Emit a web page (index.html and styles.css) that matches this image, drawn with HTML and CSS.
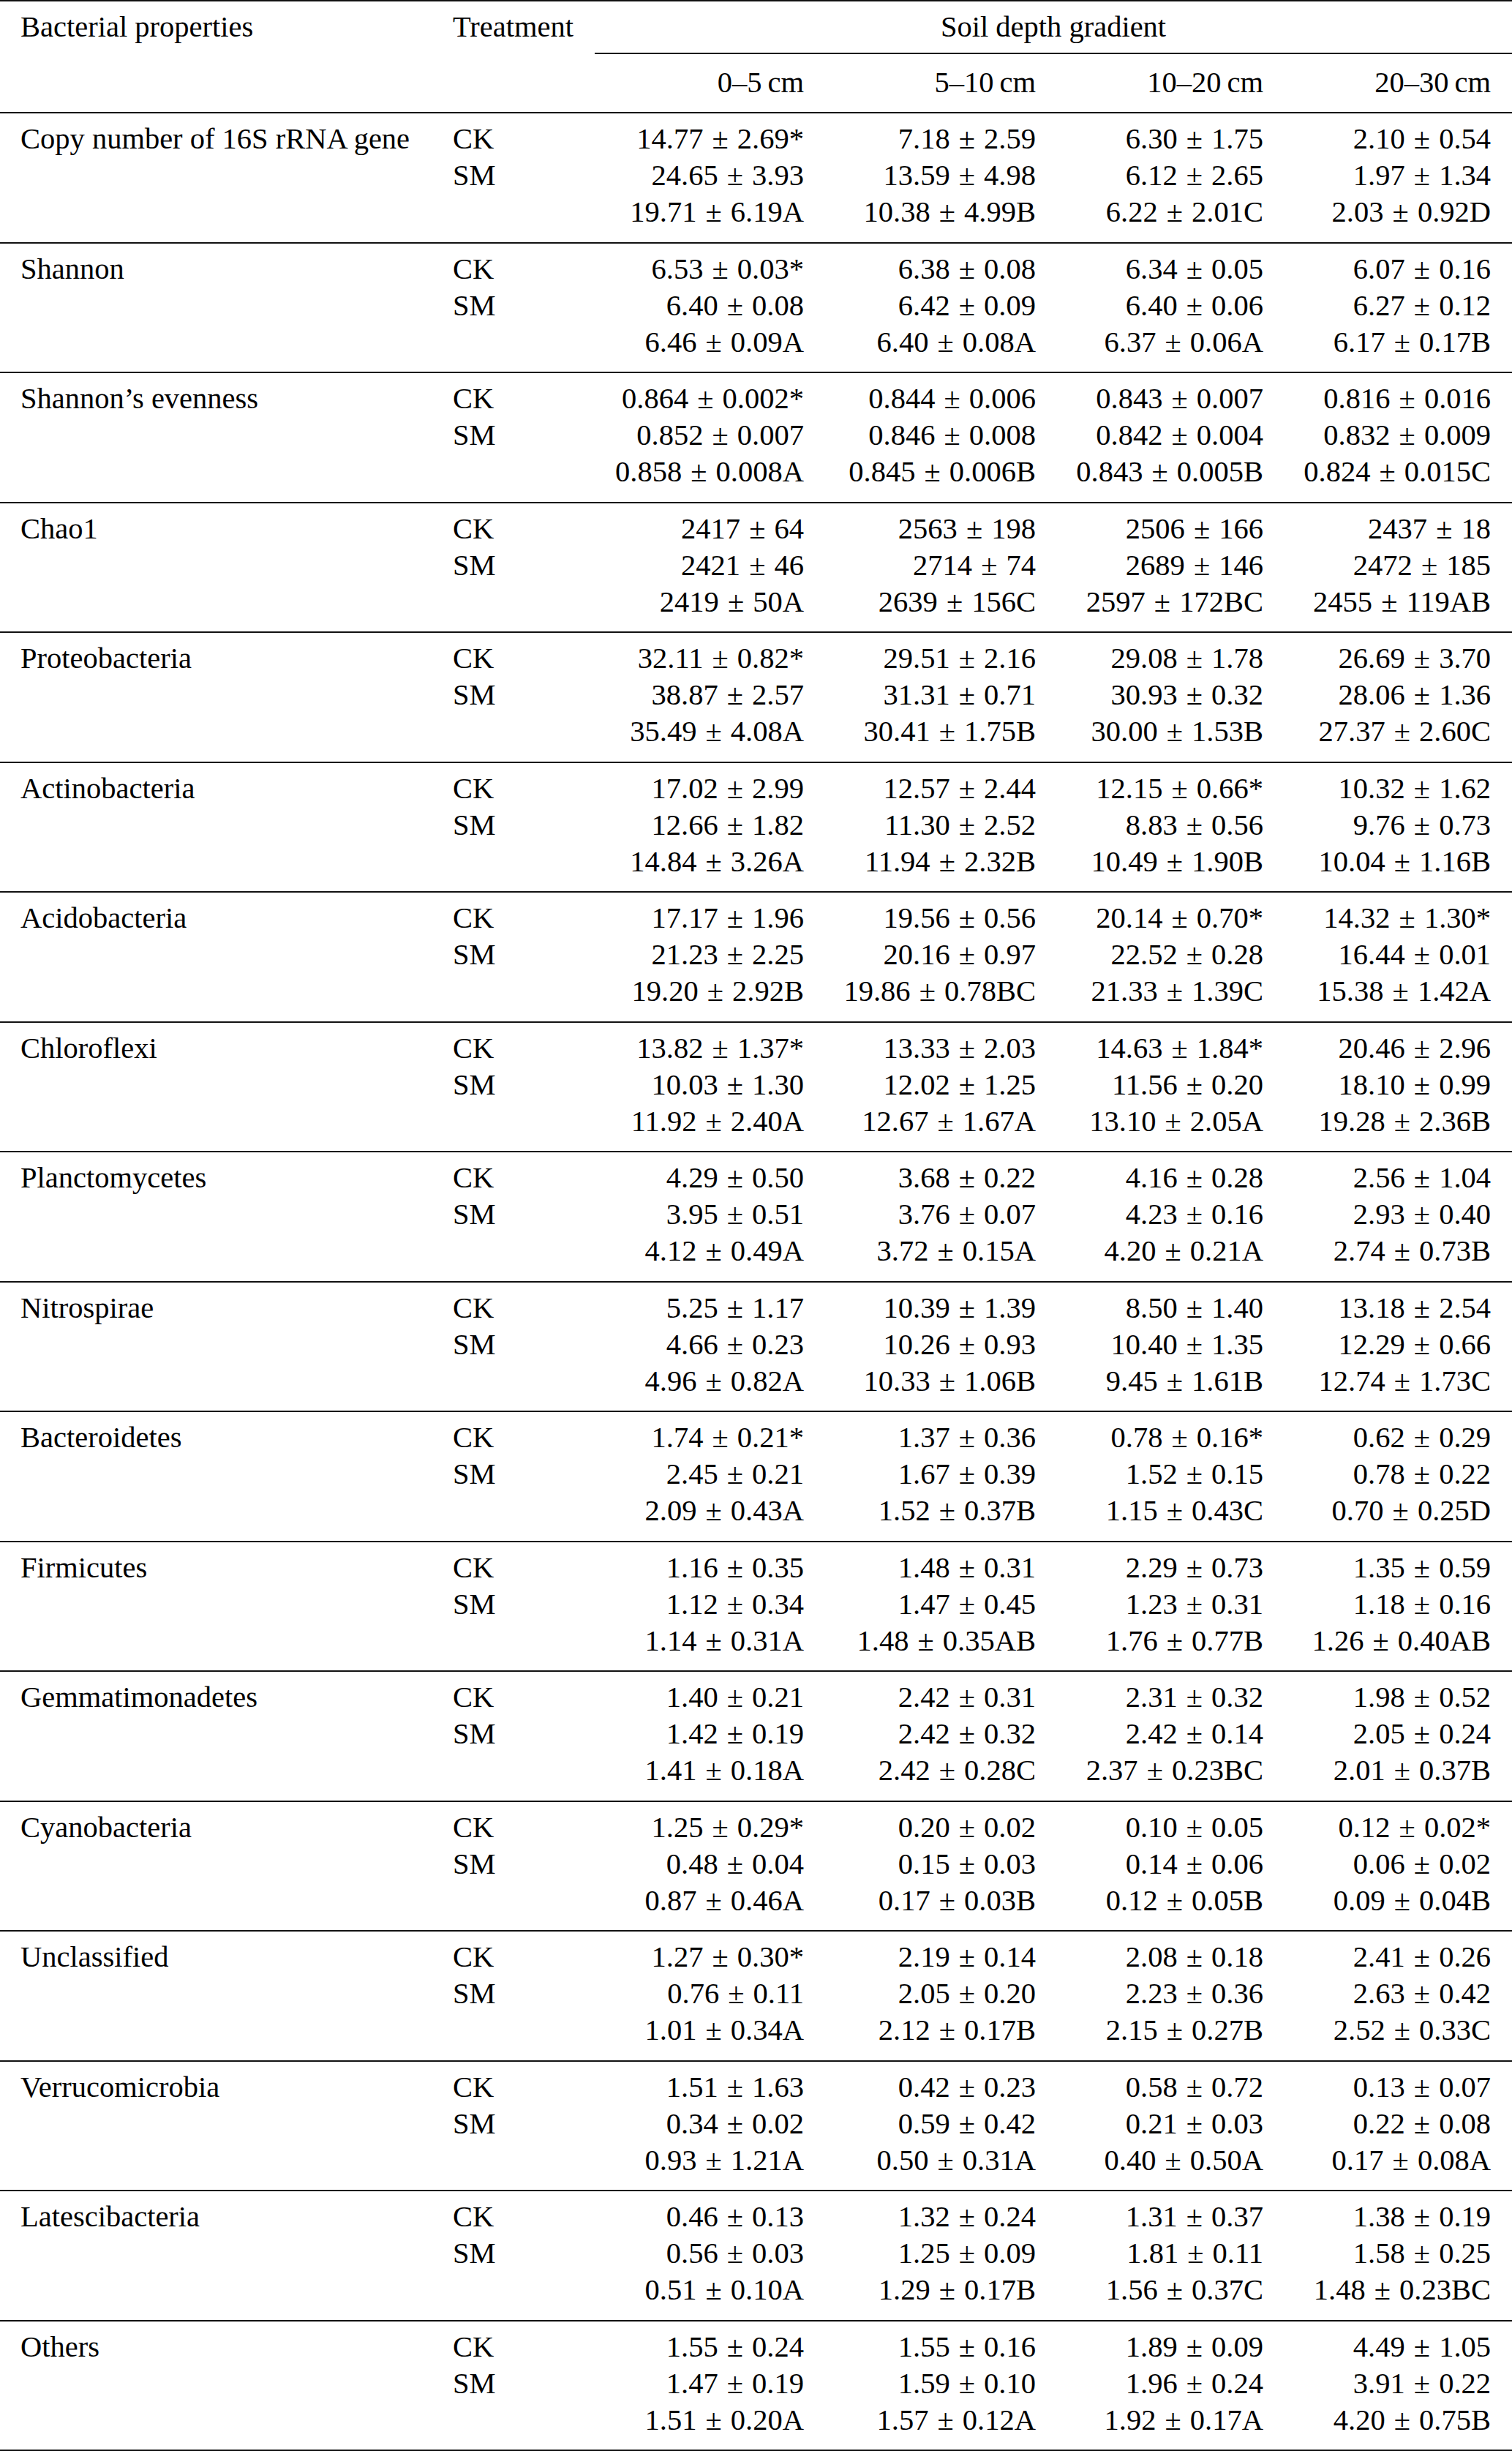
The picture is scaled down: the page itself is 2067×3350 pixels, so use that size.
FILE: index.html
```html
<!DOCTYPE html>
<html lang="en">
<head>
<meta charset="utf-8">
<title>Bacterial properties along soil depth gradient</title>
<link rel="stylesheet" href="styles.css">
</head>
<body>
<table class="data">
<colgroup>
<col class="c-prop"><col class="c-treat"><col class="c-d1"><col class="c-d2"><col class="c-d3"><col class="c-d4">
</colgroup>
<thead>
<tr class="h1">
<th class="prop">Bacterial properties</th>
<th class="treat">Treatment</th>
<th class="span" colspan="4">Soil depth gradient</th>
</tr>
<tr class="h2">
<th class="prop"></th>
<th class="treat"></th>
<th class="num">0–5&thinsp;cm</th>
<th class="num">5–10&thinsp;cm</th>
<th class="num">10–20&thinsp;cm</th>
<th class="num">20–30&thinsp;cm</th>
</tr>
</thead>
<tbody>
<tr><td class="prop">Copy number of 16S rRNA gene</td><td class="treat">CK<br>SM</td>
<td class="num">14.77 ± 2.69*<br>24.65 ± 3.93<br>19.71 ± 6.19A</td>
<td class="num">7.18 ± 2.59<br>13.59 ± 4.98<br>10.38 ± 4.99B</td>
<td class="num">6.30 ± 1.75<br>6.12 ± 2.65<br>6.22 ± 2.01C</td>
<td class="num">2.10 ± 0.54<br>1.97 ± 1.34<br>2.03 ± 0.92D</td></tr>
<tr><td class="prop">Shannon</td><td class="treat">CK<br>SM</td>
<td class="num">6.53 ± 0.03*<br>6.40 ± 0.08<br>6.46 ± 0.09A</td>
<td class="num">6.38 ± 0.08<br>6.42 ± 0.09<br>6.40 ± 0.08A</td>
<td class="num">6.34 ± 0.05<br>6.40 ± 0.06<br>6.37 ± 0.06A</td>
<td class="num">6.07 ± 0.16<br>6.27 ± 0.12<br>6.17 ± 0.17B</td></tr>
<tr><td class="prop">Shannon’s evenness</td><td class="treat">CK<br>SM</td>
<td class="num">0.864 ± 0.002*<br>0.852 ± 0.007<br>0.858 ± 0.008A</td>
<td class="num">0.844 ± 0.006<br>0.846 ± 0.008<br>0.845 ± 0.006B</td>
<td class="num">0.843 ± 0.007<br>0.842 ± 0.004<br>0.843 ± 0.005B</td>
<td class="num">0.816 ± 0.016<br>0.832 ± 0.009<br>0.824 ± 0.015C</td></tr>
<tr><td class="prop">Chao1</td><td class="treat">CK<br>SM</td>
<td class="num">2417 ± 64<br>2421 ± 46<br>2419 ± 50A</td>
<td class="num">2563 ± 198<br>2714 ± 74<br>2639 ± 156C</td>
<td class="num">2506 ± 166<br>2689 ± 146<br>2597 ± 172BC</td>
<td class="num">2437 ± 18<br>2472 ± 185<br>2455 ± 119AB</td></tr>
<tr><td class="prop">Proteobacteria</td><td class="treat">CK<br>SM</td>
<td class="num">32.11 ± 0.82*<br>38.87 ± 2.57<br>35.49 ± 4.08A</td>
<td class="num">29.51 ± 2.16<br>31.31 ± 0.71<br>30.41 ± 1.75B</td>
<td class="num">29.08 ± 1.78<br>30.93 ± 0.32<br>30.00 ± 1.53B</td>
<td class="num">26.69 ± 3.70<br>28.06 ± 1.36<br>27.37 ± 2.60C</td></tr>
<tr><td class="prop">Actinobacteria</td><td class="treat">CK<br>SM</td>
<td class="num">17.02 ± 2.99<br>12.66 ± 1.82<br>14.84 ± 3.26A</td>
<td class="num">12.57 ± 2.44<br>11.30 ± 2.52<br>11.94 ± 2.32B</td>
<td class="num">12.15 ± 0.66*<br>8.83 ± 0.56<br>10.49 ± 1.90B</td>
<td class="num">10.32 ± 1.62<br>9.76 ± 0.73<br>10.04 ± 1.16B</td></tr>
<tr><td class="prop">Acidobacteria</td><td class="treat">CK<br>SM</td>
<td class="num">17.17 ± 1.96<br>21.23 ± 2.25<br>19.20 ± 2.92B</td>
<td class="num">19.56 ± 0.56<br>20.16 ± 0.97<br>19.86 ± 0.78BC</td>
<td class="num">20.14 ± 0.70*<br>22.52 ± 0.28<br>21.33 ± 1.39C</td>
<td class="num">14.32 ± 1.30*<br>16.44 ± 0.01<br>15.38 ± 1.42A</td></tr>
<tr><td class="prop">Chloroflexi</td><td class="treat">CK<br>SM</td>
<td class="num">13.82 ± 1.37*<br>10.03 ± 1.30<br>11.92 ± 2.40A</td>
<td class="num">13.33 ± 2.03<br>12.02 ± 1.25<br>12.67 ± 1.67A</td>
<td class="num">14.63 ± 1.84*<br>11.56 ± 0.20<br>13.10 ± 2.05A</td>
<td class="num">20.46 ± 2.96<br>18.10 ± 0.99<br>19.28 ± 2.36B</td></tr>
<tr><td class="prop">Planctomycetes</td><td class="treat">CK<br>SM</td>
<td class="num">4.29 ± 0.50<br>3.95 ± 0.51<br>4.12 ± 0.49A</td>
<td class="num">3.68 ± 0.22<br>3.76 ± 0.07<br>3.72 ± 0.15A</td>
<td class="num">4.16 ± 0.28<br>4.23 ± 0.16<br>4.20 ± 0.21A</td>
<td class="num">2.56 ± 1.04<br>2.93 ± 0.40<br>2.74 ± 0.73B</td></tr>
<tr><td class="prop">Nitrospirae</td><td class="treat">CK<br>SM</td>
<td class="num">5.25 ± 1.17<br>4.66 ± 0.23<br>4.96 ± 0.82A</td>
<td class="num">10.39 ± 1.39<br>10.26 ± 0.93<br>10.33 ± 1.06B</td>
<td class="num">8.50 ± 1.40<br>10.40 ± 1.35<br>9.45 ± 1.61B</td>
<td class="num">13.18 ± 2.54<br>12.29 ± 0.66<br>12.74 ± 1.73C</td></tr>
<tr><td class="prop">Bacteroidetes</td><td class="treat">CK<br>SM</td>
<td class="num">1.74 ± 0.21*<br>2.45 ± 0.21<br>2.09 ± 0.43A</td>
<td class="num">1.37 ± 0.36<br>1.67 ± 0.39<br>1.52 ± 0.37B</td>
<td class="num">0.78 ± 0.16*<br>1.52 ± 0.15<br>1.15 ± 0.43C</td>
<td class="num">0.62 ± 0.29<br>0.78 ± 0.22<br>0.70 ± 0.25D</td></tr>
<tr><td class="prop">Firmicutes</td><td class="treat">CK<br>SM</td>
<td class="num">1.16 ± 0.35<br>1.12 ± 0.34<br>1.14 ± 0.31A</td>
<td class="num">1.48 ± 0.31<br>1.47 ± 0.45<br>1.48 ± 0.35AB</td>
<td class="num">2.29 ± 0.73<br>1.23 ± 0.31<br>1.76 ± 0.77B</td>
<td class="num">1.35 ± 0.59<br>1.18 ± 0.16<br>1.26 ± 0.40AB</td></tr>
<tr><td class="prop">Gemmatimonadetes</td><td class="treat">CK<br>SM</td>
<td class="num">1.40 ± 0.21<br>1.42 ± 0.19<br>1.41 ± 0.18A</td>
<td class="num">2.42 ± 0.31<br>2.42 ± 0.32<br>2.42 ± 0.28C</td>
<td class="num">2.31 ± 0.32<br>2.42 ± 0.14<br>2.37 ± 0.23BC</td>
<td class="num">1.98 ± 0.52<br>2.05 ± 0.24<br>2.01 ± 0.37B</td></tr>
<tr><td class="prop">Cyanobacteria</td><td class="treat">CK<br>SM</td>
<td class="num">1.25 ± 0.29*<br>0.48 ± 0.04<br>0.87 ± 0.46A</td>
<td class="num">0.20 ± 0.02<br>0.15 ± 0.03<br>0.17 ± 0.03B</td>
<td class="num">0.10 ± 0.05<br>0.14 ± 0.06<br>0.12 ± 0.05B</td>
<td class="num">0.12 ± 0.02*<br>0.06 ± 0.02<br>0.09 ± 0.04B</td></tr>
<tr><td class="prop">Unclassified</td><td class="treat">CK<br>SM</td>
<td class="num">1.27 ± 0.30*<br>0.76 ± 0.11<br>1.01 ± 0.34A</td>
<td class="num">2.19 ± 0.14<br>2.05 ± 0.20<br>2.12 ± 0.17B</td>
<td class="num">2.08 ± 0.18<br>2.23 ± 0.36<br>2.15 ± 0.27B</td>
<td class="num">2.41 ± 0.26<br>2.63 ± 0.42<br>2.52 ± 0.33C</td></tr>
<tr><td class="prop">Verrucomicrobia</td><td class="treat">CK<br>SM</td>
<td class="num">1.51 ± 1.63<br>0.34 ± 0.02<br>0.93 ± 1.21A</td>
<td class="num">0.42 ± 0.23<br>0.59 ± 0.42<br>0.50 ± 0.31A</td>
<td class="num">0.58 ± 0.72<br>0.21 ± 0.03<br>0.40 ± 0.50A</td>
<td class="num">0.13 ± 0.07<br>0.22 ± 0.08<br>0.17 ± 0.08A</td></tr>
<tr><td class="prop">Latescibacteria</td><td class="treat">CK<br>SM</td>
<td class="num">0.46 ± 0.13<br>0.56 ± 0.03<br>0.51 ± 0.10A</td>
<td class="num">1.32 ± 0.24<br>1.25 ± 0.09<br>1.29 ± 0.17B</td>
<td class="num">1.31 ± 0.37<br>1.81 ± 0.11<br>1.56 ± 0.37C</td>
<td class="num">1.38 ± 0.19<br>1.58 ± 0.25<br>1.48 ± 0.23BC</td></tr>
<tr><td class="prop">Others</td><td class="treat">CK<br>SM</td>
<td class="num">1.55 ± 0.24<br>1.47 ± 0.19<br>1.51 ± 0.20A</td>
<td class="num">1.55 ± 0.16<br>1.59 ± 0.10<br>1.57 ± 0.12A</td>
<td class="num">1.89 ± 0.09<br>1.96 ± 0.24<br>1.92 ± 0.17A</td>
<td class="num">4.49 ± 1.05<br>3.91 ± 0.22<br>4.20 ± 0.75B</td></tr>
</tbody>
</table>
</body>
</html>
```
FILE: styles.css
```css
html, body {
  margin: 0;
  padding: 0;
  background: #ffffff;
}

body {
  width: 2067px;
  overflow: hidden;
}

.data {
  width: 2067px;
  table-layout: fixed;
  border-collapse: separate;
  border-spacing: 0;
  font-family: "Liberation Serif", "Times New Roman", serif;
  font-size: 40.5px;
  line-height: 50px;
  color: #000;
}

.c-prop { width: 592px; }
.c-treat { width: 221px; }
.c-d1 { width: 315px; }
.c-d2 { width: 317px; }
.c-d3 { width: 311px; }
.c-d4 { width: 311px; }

.data th,
.data td {
  font-weight: normal;
  vertical-align: top;
  padding: 0;
  white-space: nowrap;
}

.data .prop {
  text-align: left;
  padding-left: 28px;
}

.data .treat {
  text-align: left;
  padding-left: 27px;
}

.data .num {
  text-align: right;
  padding-right: 29px;
  word-spacing: 2px;
}

.data .span {
  text-align: center;
}

/* header row 1 */
.h1 th {
  border-top: 2px solid #111;
  padding-top: 10px;
  padding-bottom: 9.5px;
}

.h1 .span {
  border-bottom: 2px solid #111;
}

/* header row 2 */
.h2 th {
  padding-top: 14px;
  padding-bottom: 15.5px;
}

/* body groups */
.data tbody td {
  border-top: 2px solid #111;
  padding-top: 10px;
  padding-bottom: 15.5px;
}

.data tbody tr:last-child td {
  border-bottom: 2px solid #111;
}
```
